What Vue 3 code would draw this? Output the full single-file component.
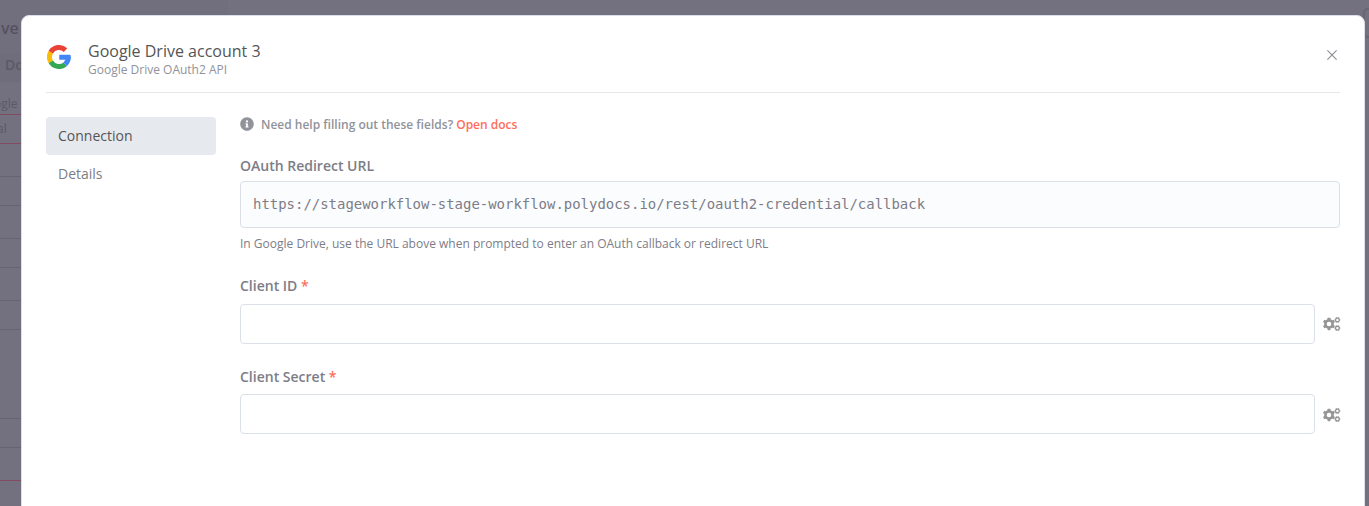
<script setup>
const rows = [
  { h: 21, text: 'ogle', red: true, cls: 'first' },
  { h: 28, text: 'al', red: true },
  { h: 32 }, { h: 28 }, { h: 32 }, { h: 28 }, { h: 32 }, { h: 28 }, { h: 88 }, { h: 28 },
  { h: 32, red: true },
  { h: 25 },
]
const fields = ['Client ID', 'Client Secret']
const teeth = [0, 60, 120, 180, 240, 300]
</script>

<template>
  <div class="page">
    <div class="behind">
      <div class="behind-title">ve</div>
      <div class="behind-tab">Do</div>
      <div v-for="(r, i) in rows" :key="i" class="line" :class="[{ red: r.red }, r.cls]" :style="{ height: r.h + 'px' }">{{ r.text }}</div>
    </div>
    <div class="behind-button"></div>

    <section class="modal">
      <header class="head">
        <svg class="google" viewBox="0 0 48 48">
          <path stroke="#FBBC05" d="M7.5 33.5A19 19 0 0 1 7.5 14.5" />
          <path stroke="#EA4335" d="M7.5 14.5A19 19 0 0 1 37.1 10.3" />
          <path stroke="#34A853" d="M36.2 38.6A19 19 0 0 1 7.5 33.5" />
          <path stroke="#4285F4" d="M42.6 24A19 19 0 0 1 36.2 38.6" />
          <path class="bar" d="M24.5 19.7H47c.4 2 .5 4 .3 6.5l-1 3.2H24.5z" />
        </svg>
        <div class="titles">
          <h1>Google Drive account 3</h1>
          <p>Google Drive OAuth2 API</p>
        </div>
        <svg class="close" viewBox="0 0 10 10"><path d="M0.4 0.4L9.6 9.6M9.6 0.4L0.4 9.6" /></svg>
      </header>

      <div class="body">
        <nav>
          <a class="active">Connection</a>
          <a>Details</a>
        </nav>
        <main>
          <div class="notice">
            <svg viewBox="0 0 512 512"><path d="M256 8C119 8 8 119 8 256s111 248 248 248 248-111 248-248S393 8 256 8zm0 110a42 42 0 1 1 0 84 42 42 0 0 1 0-84zm56 254c0 7-5 12-12 12h-88c-7 0-12-5-12-12v-24c0-7 5-12 12-12h12v-64h-12c-7 0-12-5-12-12v-24c0-7 5-12 12-12h64c7 0 12 5 12 12v100h12c7 0 12 5 12 12v24z" /></svg>
            <span>Need help filling out these fields? <a>Open docs</a></span>
          </div>
          <label>OAuth Redirect URL</label>
          <div class="url">https://stageworkflow-stage-workflow.polydocs.io/rest/oauth2-credential/callback</div>
          <p class="hint">In Google Drive, use the URL above when prompted to enter an OAuth callback or redirect URL</p>
          <div v-for="f in fields" :key="f" class="field">
            <label>{{ f }} <b>*</b></label>
            <div class="input-row">
              <div class="input"></div>
              <svg class="cogs" viewBox="0 0 18 14">
                <circle cx="6" cy="7" r="3.6" fill="none" stroke-width="2.6" />
                <rect v-for="t in teeth" :key="'a' + t" x="4.6" y="0.8" width="2.8" height="2.2" rx=".4" :transform="`rotate(${t} 6 7)`" />
                <g v-for="y in [2.9, 11.1]" :key="y">
                  <circle cx="14.4" :cy="y" r="1.85" fill="none" stroke-width="1.3" />
                  <rect v-for="t in teeth" :key="t" x="13.7" :y="y - 2.9" width="1.4" height="1" :transform="`rotate(${t + 30} 14.4 ${y})`" />
                </g>
              </svg>
            </div>
          </div>
        </main>
      </div>
    </section>
  </div>
</template>

<style>
body { margin: 0; overflow: hidden; }
</style>

<style scoped>
* { box-sizing: border-box; }
.page { position: relative; height: 506px; overflow: hidden; background: #737080; font-family: "Open Sans", sans-serif; padding: 15px 4px 0 21px; }
.behind { position: absolute; left: 0; top: 0; width: 228px; height: 506px; color: #55525f; white-space: nowrap; overflow: hidden; }
.behind-title { height: 54px; padding: 16px 0 0 1px; font-size: 16px; line-height: 24px; font-weight: 600; background: #716e7e; }
.behind-tab { height: 28px; padding-left: 5px; font-size: 14px; line-height: 22px; font-weight: 600; color: #5c5967; background: #6f6c7b; }
.line { box-sizing: content-box; border-bottom: 1px solid #666373; color: #5c5967; font-size: 12px; line-height: 28px; text-indent: -3px; }
.line.first { line-height: 21px; padding-top: 11px; text-indent: -6px; }
.line.red { border-color: #834b60; }
.behind-button { position: absolute; left: 1363px; top: 8px; width: 40px; height: 30px; border: 2px solid #686575; border-radius: 5px; }
.modal { position: relative; width: 1344px; height: 520px; background: #fff; border: 1px solid #dbdfe7; border-radius: 8px; padding: 0 24px; }
.head { display: flex; align-items: flex-start; height: 77px; border-bottom: 1px solid #e6e7ea; }
.google { width: 24px; height: 24px; margin: 29px 17px 0 1px; flex: none; fill: none; stroke-width: 10; }
.google .bar { fill: #4285f4; stroke: none; }
.titles { flex: 1; padding-top: 25px; }
h1 { margin: 0; font-size: 16px; line-height: 21px; font-weight: 400; color: #555; }
p { margin: 0; }
.titles p { font-size: 12px; line-height: 16px; color: #909399; }
.close { width: 10px; height: 10px; margin: 34px 3px 0 0; fill: none; stroke: #888b90; stroke-width: 1.1; }
.body { display: flex; gap: 24px; padding-top: 24px; }
nav { width: 170px; flex: none; }
nav a { display: block; height: 38px; padding-left: 12px; font-size: 14px; line-height: 38px; color: #7d7d87; border-radius: 4px; }
nav .active { background: #e6e9ee; color: #555; }
main { flex: 1; }
.notice { display: flex; height: 40px; font-size: 12px; line-height: 16px; font-weight: 600; color: #909399; gap: 7px; }
.notice svg { width: 14px; height: 14px; fill: #909399; }
.notice a { color: #ff6d5a; }
label { display: block; font-size: 14px; line-height: 18px; font-weight: 600; color: #7d7d87; }
label b { color: #ff6d5a; font-weight: 600; }
.url { margin-top: 6px; height: 47px; border: 1px solid #dbdfe7; border-radius: 4px; background: #fbfcfe; padding-left: 12px; font: 13.96px/45px "DejaVu Sans Mono", monospace; color: #7d7d87; }
.hint { margin-top: 8px; height: 41px; font-size: 12px; line-height: 16px; color: #7d7d87; }
.field { height: 91px; }
.field + .field .input-row { margin-top: 8px; }
.field + .field .cogs { margin-top: 1px; }
.input-row { display: flex; align-items: center; justify-content: space-between; margin: 9px -1px 0 0; }
.input { width: 1075px; height: 40px; border: 1px solid #dbdfe7; border-radius: 4px; }
.cogs { width: 18px; height: 14px; fill: #969696; stroke: none; }
.cogs circle { stroke: #969696; }
</style>
